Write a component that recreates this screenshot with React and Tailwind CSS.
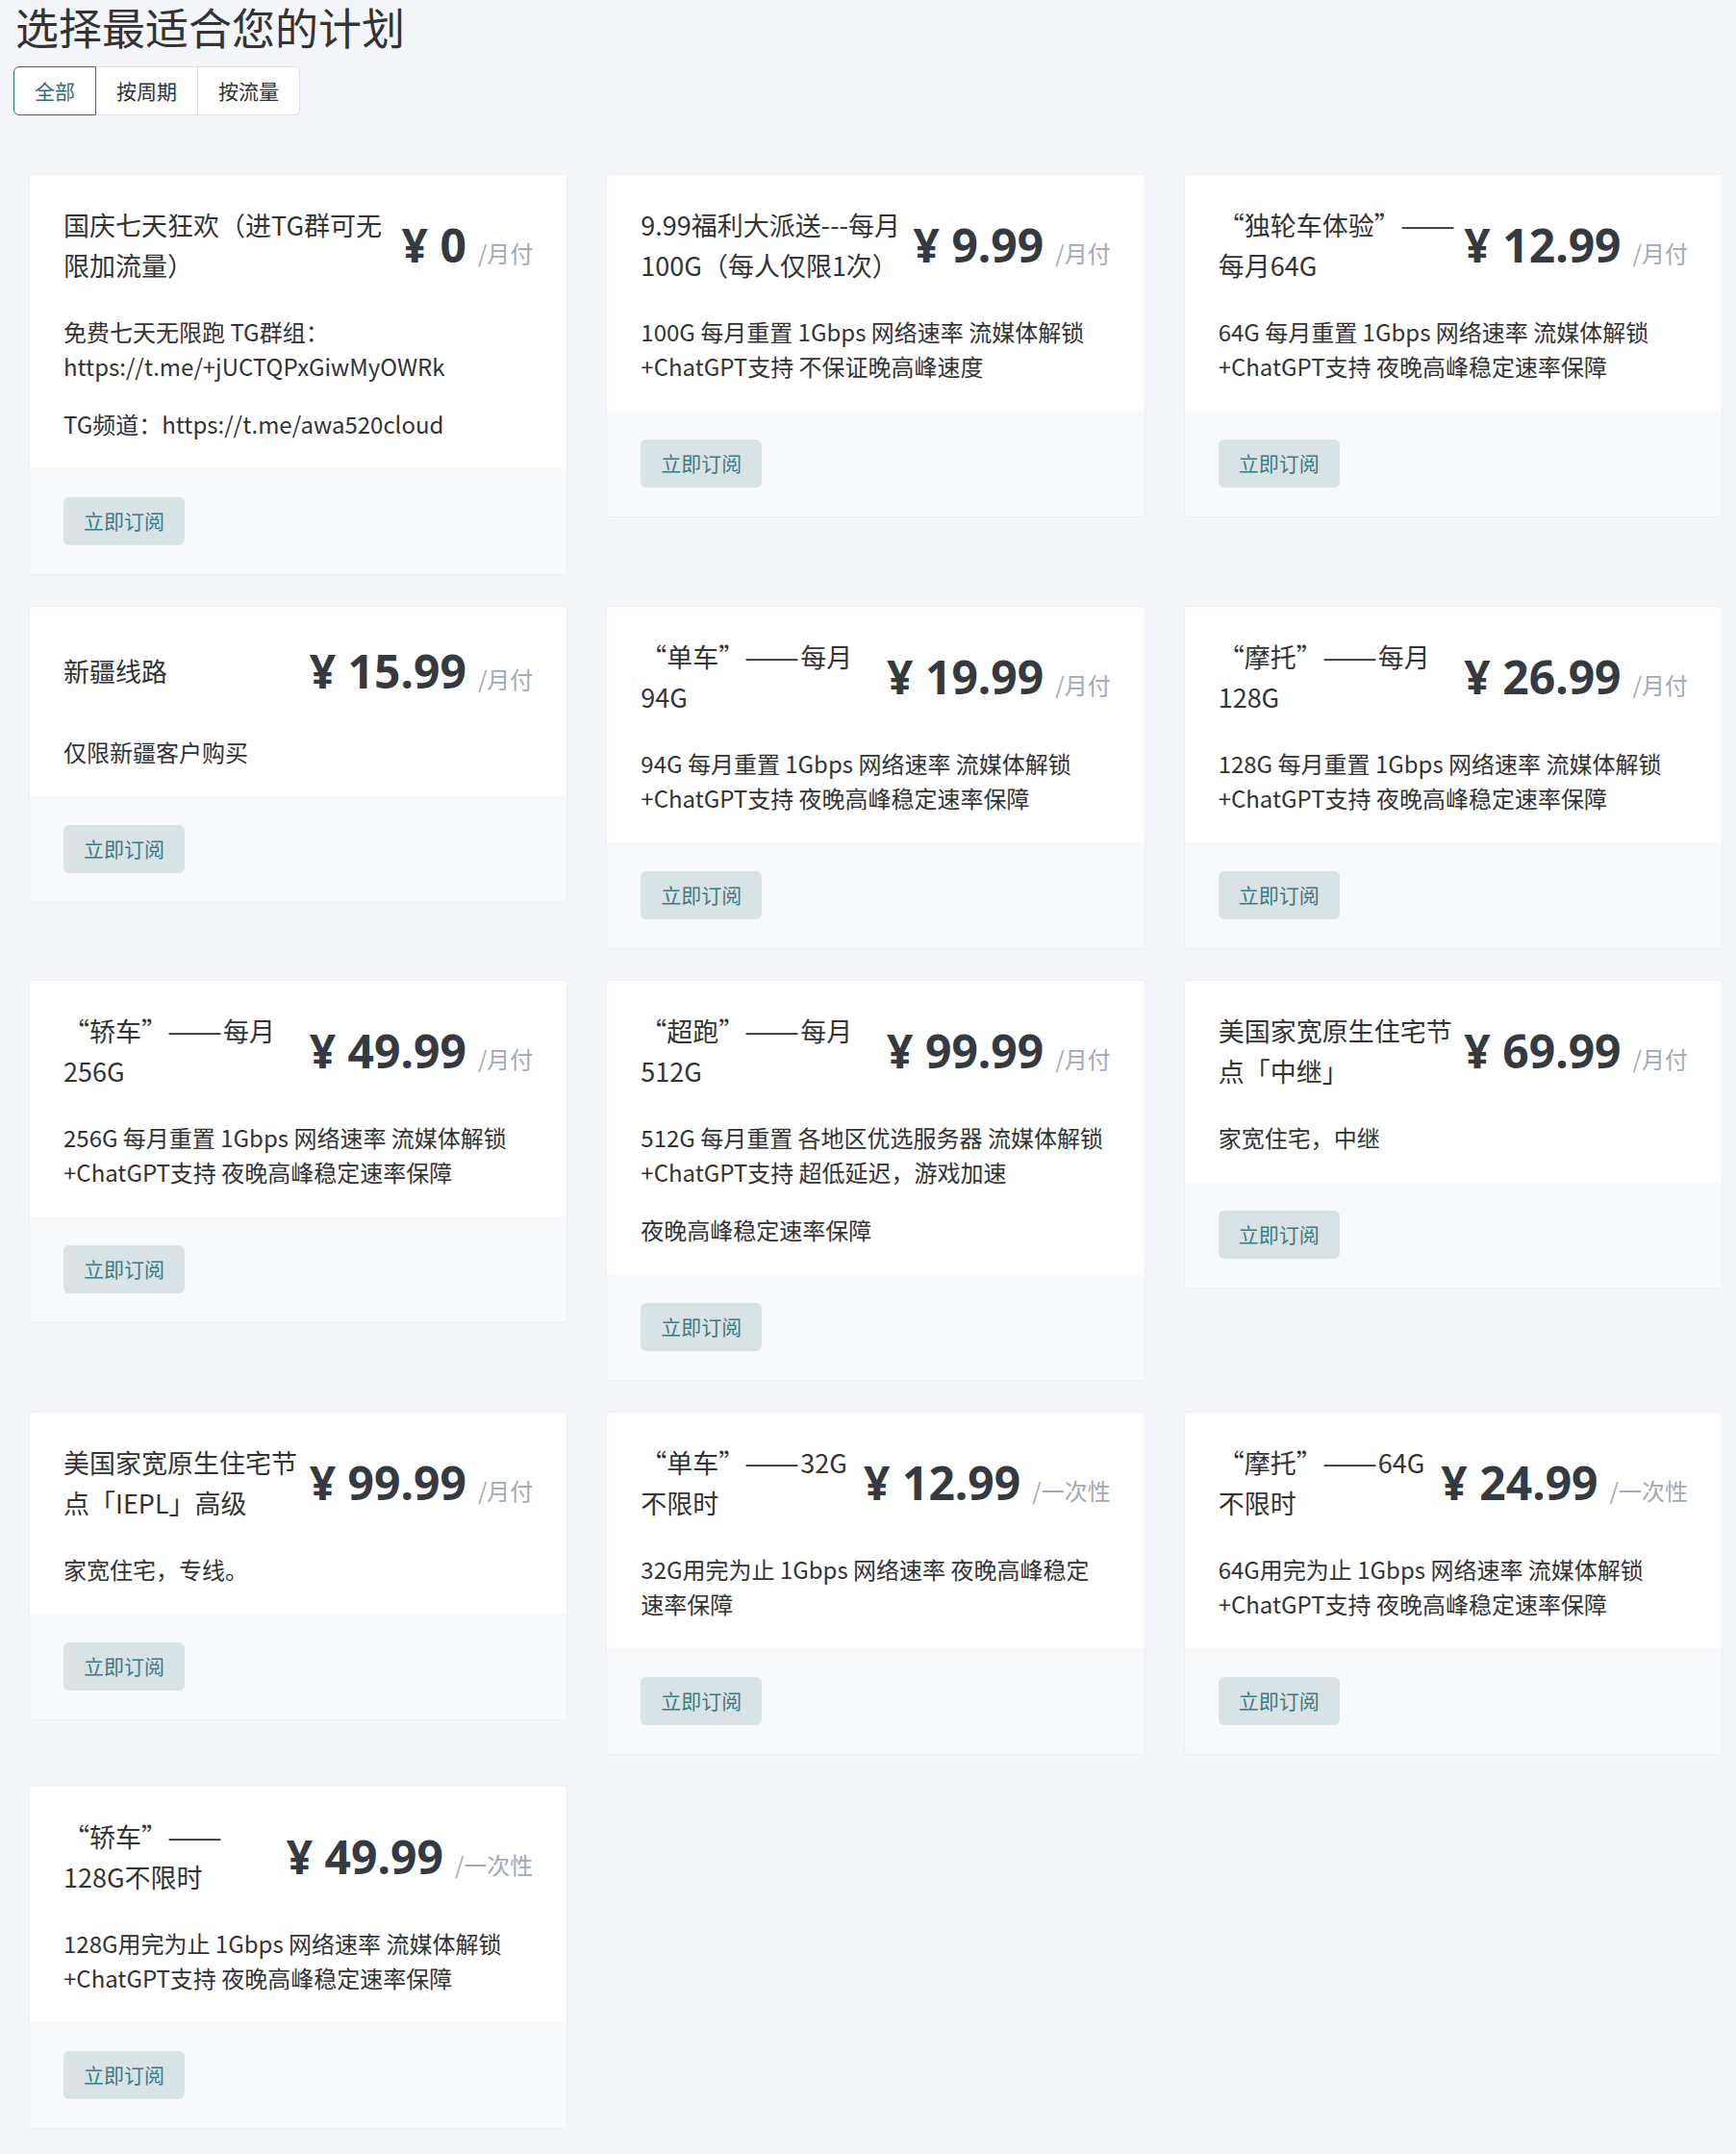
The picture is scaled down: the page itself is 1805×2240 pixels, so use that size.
const plans = [
  {
    name: ['国庆七天狂欢（进TG群可无', '限加流量）'],
    price: '0',
    unit: '月付',
    desc: [['免费七天无限跑 TG群组：', 'https://t.me/+jUCTQPxGiwMyOWRk'], ['TG频道：https://t.me/awa520cloud']],
  },
  {
    name: ['9.99福利大派送---每月', '100G（每人仅限1次）'],
    price: '9.99',
    unit: '月付',
    desc: [['100G 每月重置 1Gbps 网络速率 流媒体解锁 +ChatGPT支持 不保证晚高峰速度']],
  },
  {
    name: ['“独轮车体验”——', '每月64G'],
    price: '12.99',
    unit: '月付',
    desc: [['64G 每月重置 1Gbps 网络速率 流媒体解锁 +ChatGPT支持 夜晚高峰稳定速率保障']],
  },
  { name: ['新疆线路'], price: '15.99', unit: '月付', desc: [['仅限新疆客户购买']] },
  {
    name: ['“单车”——每月', '94G'],
    price: '19.99',
    unit: '月付',
    desc: [['94G 每月重置 1Gbps 网络速率 流媒体解锁 +ChatGPT支持 夜晚高峰稳定速率保障']],
  },
  {
    name: ['“摩托”——每月', '128G'],
    price: '26.99',
    unit: '月付',
    desc: [['128G 每月重置 1Gbps 网络速率 流媒体解锁 +ChatGPT支持 夜晚高峰稳定速率保障']],
  },
  {
    name: ['“轿车”——每月', '256G'],
    price: '49.99',
    unit: '月付',
    desc: [['256G 每月重置 1Gbps 网络速率 流媒体解锁 +ChatGPT支持 夜晚高峰稳定速率保障']],
  },
  {
    name: ['“超跑”——每月', '512G'],
    price: '99.99',
    unit: '月付',
    desc: [['512G 每月重置 各地区优选服务器 流媒体解锁 +ChatGPT支持 超低延迟，游戏加速'], ['夜晚高峰稳定速率保障']],
  },
  { name: ['美国家宽原生住宅节', '点「中继」'], price: '69.99', unit: '月付', desc: [['家宽住宅，中继']] },
  { name: ['美国家宽原生住宅节', '点「IEPL」高级'], price: '99.99', unit: '月付', desc: [['家宽住宅，专线。']] },
  {
    name: ['“单车”——32G', '不限时'],
    price: '12.99',
    unit: '一次性',
    desc: [['32G用完为止 1Gbps 网络速率 夜晚高峰稳定速率保障']],
  },
  {
    name: ['“摩托”——64G', '不限时'],
    price: '24.99',
    unit: '一次性',
    desc: [['64G用完为止 1Gbps 网络速率 流媒体解锁 +ChatGPT支持 夜晚高峰稳定速率保障']],
  },
  {
    name: ['“轿车”——', '128G不限时'],
    price: '49.99',
    unit: '一次性',
    desc: [['128G用完为止 1Gbps 网络速率 流媒体解锁 +ChatGPT支持 夜晚高峰稳定速率保障']],
  },
]

const cjk = 'font-["Noto_Sans_CJK_SC",sans-serif]'

// the CJK font draws the em dash narrow; stretch it to the width the reference shows
function TitleLine({ text }) {
  const parts = text.split('——')
  return parts.map((part, i) => (
    <span key={i}>
      {i > 0 && (
        <span className="inline-block w-[58px] whitespace-nowrap">
          <span className="inline-block origin-left scale-x-[1.26]">——</span>
        </span>
      )}
      {part}
    </span>
  ))
}

function PlanCard({ plan }) {
  return (
    <div className="overflow-hidden rounded border border-[#eceef2] bg-white">
      <div className="px-[35px] pt-[31px] pb-[28px]">
        <div className="flex items-center">
          <div className={`min-w-0 flex-1 text-[27px] leading-[42px] text-[#333] ${cjk}`}>
            {plan.name.map((line, i) => (
              <span key={i}>
                {i > 0 && <br />}
                <TitleLine text={line} />
              </span>
            ))}
          </div>
          <div className="shrink-0 whitespace-nowrap">
            <span className='font-["Noto_Sans",sans-serif] text-[48px] font-bold leading-[72px] text-[#343a40]'>
              ¥ {plan.price}
            </span>
            <span className={`ml-3 text-[24px] text-[#a3aab5] ${cjk}`}>/{plan.unit}</span>
          </div>
        </div>
        <div className={`mt-[30px] space-y-6 text-[24px] leading-[36px] text-[#333] ${cjk}`}>
          {plan.desc.map((lines, i) => (
            <p key={i}>
              {lines.map((l, j) => (
                <span key={j}>
                  {j > 0 && <br />}
                  {l}
                </span>
              ))}
            </p>
          ))}
        </div>
      </div>
      <div className="bg-[#f8f9fb] px-[35px] py-[30px]">
        <button className={`h-[50px] rounded-md bg-[#d9e2e5] px-[21px] text-[21px] text-[#3a7c84] ${cjk}`}>
          立即订阅
        </button>
      </div>
    </div>
  )
}

export default function App() {
  return (
    <div className={`min-h-[2240px] bg-[#f4f5f9] px-[14px] ${cjk}`}>
      <h1 className="pl-[2px] text-[45px] leading-[56px] font-normal text-[#333]">选择最适合您的计划</h1>
      <div className="mt-[13px] flex">
        <button className="relative z-10 h-[51px] rounded-l-md border border-[#2e7075] bg-white px-[21px] text-[21px] text-[#2e7075]">
          全部
        </button>
        <button className="-ml-px h-[51px] border border-[#dee2e6] bg-white px-[21px] text-[21px] text-[#333]">
          按周期
        </button>
        <button className="-ml-px h-[51px] rounded-r-md border border-[#dee2e6] bg-white px-[21px] text-[21px] text-[#333]">
          按流量
        </button>
      </div>
      <div className="mt-[61px] ml-4 grid grid-cols-3 items-start gap-x-10 gap-y-8">
        {plans.map((p, i) => (
          <PlanCard key={i} plan={p} />
        ))}
      </div>
    </div>
  )
}
